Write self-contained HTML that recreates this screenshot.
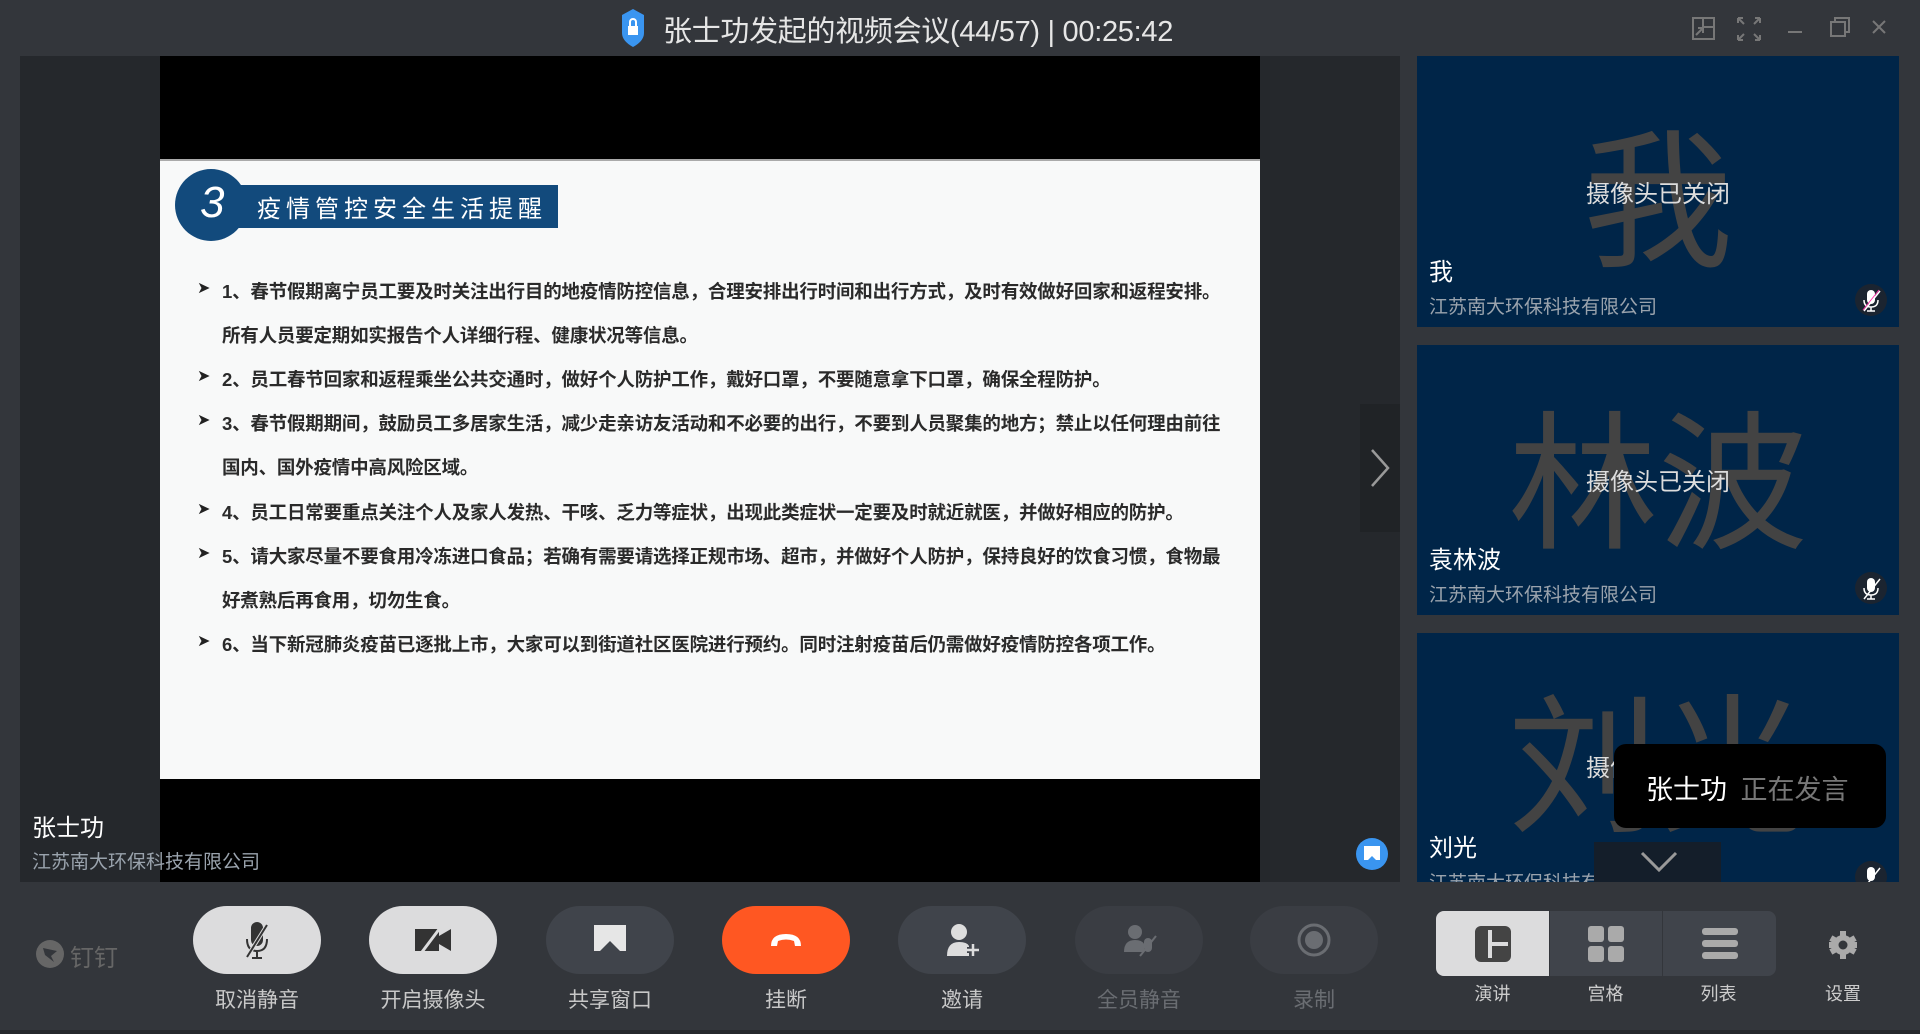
<!DOCTYPE html>
<html><head><meta charset="utf-8"><style>
*{margin:0;padding:0;box-sizing:border-box}
body{width:1920px;height:1034px;background:#33363b;font-family:"Liberation Sans","Noto Sans CJK SC",sans-serif;position:relative;overflow:hidden;color:#fff}
.a{position:absolute}
.title{left:663px;top:8px;font-size:29px;color:#e6e6e6;white-space:nowrap;letter-spacing:-0.3px}
.main{left:20px;top:56px;width:1380px;height:826px;background:#25282c}
.black{left:160px;top:56px;width:1100px;height:826px;background:#000}
.slide{left:160px;top:159px;width:1100px;height:620px;background:#f8f9f9;border-top:2px solid #aaa}
.ln{position:absolute;left:62px;font-size:18.5px;color:#2a2a2a;white-space:nowrap;font-weight:bold;letter-spacing:-0.2px}
.ar{position:absolute;left:37px;font-size:16px;color:#222}
.tile{left:1417px;width:482px;background:#002548;overflow:hidden}
.big{position:absolute;left:0;width:100%;text-align:center;color:#434343;font-size:150px;line-height:1}
.cam{position:absolute;width:100%;text-align:center;font-size:24px;color:#ddd}
.nm{position:absolute;left:12px;font-size:24px;color:#fff}
.co{position:absolute;left:12px;font-size:19px;color:#9aa3ad}
.mic{position:absolute;right:12px;width:32px;height:32px}
.btn{top:906px;width:128px;height:68px;border-radius:34px}
.lb{top:984px;font-size:21px;color:#c8c8c8;width:160px;text-align:center}
</style></head><body>
<svg class="a" style="left:622px;top:9px" width="22" height="38" viewBox="0 0 22 38"><path d="M11 0 L22 6 L22 24 Q22 32 11 38 Q0 32 0 24 L0 6Z" fill="#3a95f0"/><rect x="6" y="17" width="10" height="9" fill="#fff"/><path d="M8 17 V13 a3 3 0 0 1 6 0 V17" stroke="#fff" stroke-width="2" fill="none"/></svg>
<div class="a title">张士功发起的视频会议(44/57) | 00:25:42</div>
<svg class="a" style="left:1690px;top:15px" width="200" height="28" viewBox="0 0 200 28" stroke="#777" stroke-width="2" fill="none">
<rect x="3" y="3" width="21" height="21"/><rect x="13" y="3" width="11" height="9"/><path d="M6 20 L13 13 M8 13 H13 V18"/>
<path d="M48 3 L54 9 M48 3 V8 M48 3 H53 M70 3 L64 9 M70 3 H65 M70 3 V8 M48 25 L54 19 M48 25 V20 M48 25 H53 M70 25 L64 19 M70 25 H65 M70 25 V20"/>
<path d="M98 17 H112"/>
<rect x="141" y="7" width="14" height="14"/><path d="M145 7 V3 H159 V17 H155"/>
<path d="M183 6 L195 18 M195 6 L183 18"/></svg>
<div class="a main"></div>
<div class="a black"></div>
<div class="a slide">
<div style="position:absolute;left:15px;top:8px;width:72px;height:72px;border-radius:50%;background:#124a7c"></div>
<div style="position:absolute;left:78px;top:24px;width:320px;height:43px;background:#124a7c"></div>
<div style="position:absolute;left:40px;top:17px;font-size:44px;font-style:italic;color:#fff;font-family:'Liberation Sans'">3</div>
<div style="position:absolute;left:97px;top:28px;font-size:24px;color:#fff;letter-spacing:5px">疫情管控安全生活提醒</div>
<div class="ar" style="top:117px">➤</div><div class="ln" style="top:117px">1、春节假期离宁员工要及时关注出行目的地疫情防控信息，合理安排出行时间和出行方式，及时有效做好回家和返程安排。</div>
<div class="ln" style="top:161px">所有人员要定期如实报告个人详细行程、健康状况等信息。</div>
<div class="ar" style="top:205px">➤</div><div class="ln" style="top:205px">2、员工春节回家和返程乘坐公共交通时，做好个人防护工作，戴好口罩，不要随意拿下口罩，确保全程防护。</div>
<div class="ar" style="top:249px">➤</div><div class="ln" style="top:249px">3、春节假期期间，鼓励员工多居家生活，减少走亲访友活动和不必要的出行，不要到人员聚集的地方；禁止以任何理由前往</div>
<div class="ln" style="top:293px">国内、国外疫情中高风险区域。</div>
<div class="ar" style="top:338px">➤</div><div class="ln" style="top:338px">4、员工日常要重点关注个人及家人发热、干咳、乏力等症状，出现此类症状一定要及时就近就医，并做好相应的防护。</div>
<div class="ar" style="top:382px">➤</div><div class="ln" style="top:382px">5、请大家尽量不要食用冷冻进口食品；若确有需要请选择正规市场、超市，并做好个人防护，保持良好的饮食习惯，食物最</div>
<div class="ln" style="top:426px">好煮熟后再食用，切勿生食。</div>
<div class="ar" style="top:470px">➤</div><div class="ln" style="top:470px">6、当下新冠肺炎疫苗已逐批上市，大家可以到街道社区医院进行预约。同时注射疫苗后仍需做好疫情防控各项工作。</div>
</div>
<div class="a" style="left:32px;top:808px;font-size:24px">张士功</div>
<div class="a" style="left:32px;top:847px;font-size:19px;color:#9aa3ad">江苏南大环保科技有限公司</div>
<div class="a" style="left:1360px;top:404px;width:40px;height:128px;background:#202326"></div>
<svg class="a" style="left:1370px;top:448px" width="20" height="40"><path d="M2 2 L18 20 L2 38" stroke="#999" stroke-width="2.5" fill="none"/></svg>
<svg class="a" style="left:1356px;top:838px" width="32" height="32"><circle cx="16" cy="16" r="16" fill="#3a95f0"/><rect x="8" y="8" width="16" height="14" fill="#fff"/><path d="M10 24 L16 18 L22 24" fill="#3a95f0"/></svg>

<div class="a tile" style="top:56px;height:271px">
<div class="big" style="top:72px">我</div><div class="cam" style="top:118px">摄像头已关闭</div>
<div class="nm" style="top:196px">我</div><div class="co" style="top:236px">江苏南大环保科技有限公司</div>
<svg class="mic" style="top:228px" viewBox="0 0 32 32"><circle cx="16" cy="16" r="16" fill="#1b2430"/><rect x="12" y="6" width="8" height="14" rx="4" fill="#fff"/><path d="M9 16 Q9 23 16 23 Q23 23 23 16 M16 23 V27 M12 27 H20" stroke="#fff" stroke-width="1.5" fill="none"/><path d="M8 26 L24 6" stroke="#f3a" stroke-width="1"/><path d="M9 27 L25 7" stroke="#fff" stroke-width="1.5"/></svg></div>
<div class="a tile" style="top:345px;height:270px">
<div class="big" style="top:65px">林波</div><div class="cam" style="top:117px">摄像头已关闭</div>
<div class="nm" style="top:195px">袁林波</div><div class="co" style="top:235px">江苏南大环保科技有限公司</div>
<svg class="mic" style="top:227px" viewBox="0 0 32 32"><circle cx="16" cy="16" r="16" fill="#1b2430"/><rect x="12" y="6" width="8" height="14" rx="4" fill="#fff"/><path d="M9 16 Q9 23 16 23 Q23 23 23 16 M16 23 V27 M12 27 H20" stroke="#fff" stroke-width="1.5" fill="none"/><path d="M9 27 L25 7" stroke="#fff" stroke-width="1.5"/></svg></div>
<div class="a tile" style="top:633px;height:249px">
<div class="big" style="top:60px">刘光</div><div class="cam" style="top:115px">摄像头已关闭</div>
<div class="nm" style="top:195px">刘光</div><div class="co" style="top:235px">江苏南大环保科技有限公司</div>
<svg class="mic" style="top:228px" viewBox="0 0 32 32"><circle cx="16" cy="16" r="16" fill="#1b2430"/><rect x="12" y="6" width="8" height="14" rx="4" fill="#fff"/><path d="M9 27 L25 7" stroke="#fff" stroke-width="1.5"/></svg>
<div style="position:absolute;left:177px;top:209px;width:127px;height:45px;background:#141e2a"></div>
<svg style="position:absolute;left:223px;top:218px" width="38" height="22"><path d="M2 2 L19 19 L36 2" stroke="#999" stroke-width="3" fill="none"/></svg></div>
<div class="a" style="left:1614px;top:744px;width:272px;height:84px;background:#000;border-radius:12px;font-size:27px;padding:24px 0 0 32px;white-space:nowrap">张士功 <span style="color:#777;margin-left:6px">正在发言</span></div>

<div class="a" style="left:0;top:1030px;width:1920px;height:4px;background:#25282c"></div>
<svg class="a" style="left:36px;top:940px" width="28" height="28"><circle cx="14" cy="14" r="14" fill="#666"/><path d="M7 8 L21 11 L15 16 L18 22 L9 15Z" fill="#33363b"/></svg>
<div class="a" style="left:70px;top:938px;font-size:24px;color:#666">钉钉</div>

<div class="a btn" style="left:193px;background:#dcdcdd"></div>
<svg class="a" style="left:243px;top:921px" width="28" height="40" stroke="#333" stroke-width="2" fill="none"><rect x="9" y="2" width="10" height="22" rx="5" fill="#333"/><path d="M4 18 Q4 30 14 30 Q24 30 24 18 M14 30 V37 M9 37 H19"/><path d="M4 36 L24 4" stroke="#dcdcdd" stroke-width="4"/><path d="M4 36 L24 4"/></svg>
<div class="a lb" style="left:177px">取消静音</div>
<div class="a btn" style="left:369px;background:#dcdcdd"></div>
<svg class="a" style="left:413px;top:923px" width="40" height="34"><rect x="2" y="6" width="24" height="22" fill="#333"/><path d="M26 13 L38 6 V28 L26 21Z" fill="#333"/><path d="M6 33 L30 1" stroke="#dcdcdd" stroke-width="3"/></svg>
<div class="a lb" style="left:353px">开启摄像头</div>
<div class="a btn" style="left:546px;background:#40444b"></div>
<svg class="a" style="left:593px;top:924px" width="34" height="30"><rect x="1" y="1" width="32" height="26" fill="#e6e6e6"/><path d="M7 27 L17 17 L27 27Z" fill="#40444b"/></svg>
<div class="a lb" style="left:530px">共享窗口</div>
<div class="a btn" style="left:722px;background:#ff5722"></div>
<svg class="a" style="left:768px;top:930px" width="36" height="20"><path d="M3 16 Q3 4 18 4 Q33 4 33 16 L27 16 L26 11 Q18 8 10 11 L9 16Z" fill="#fff"/></svg>
<div class="a lb" style="left:706px">挂断</div>
<div class="a btn" style="left:898px;background:#40444b"></div>
<svg class="a" style="left:945px;top:922px" width="36" height="36"><circle cx="14" cy="10" r="8" fill="#ddd"/><path d="M2 34 Q2 20 14 20 Q22 20 24 24 V34Z" fill="#ddd"/><path d="M28 22 V34 M22 28 H34" stroke="#40444b" stroke-width="6"/><path d="M28 22 V34 M22 28 H34" stroke="#ddd" stroke-width="2.5"/></svg>
<div class="a lb" style="left:882px">邀请</div>
<div class="a btn" style="left:1075px;background:#3a3d43"></div>
<svg class="a" style="left:1122px;top:922px" width="36" height="36" fill="#6a6d72"><circle cx="13" cy="10" r="7"/><path d="M2 30 Q2 18 13 18 Q20 18 22 22 V30Z"/><rect x="22" y="16" width="8" height="14" rx="4"/><path d="M18 34 L34 14" stroke="#6a6d72" stroke-width="2"/></svg>
<div class="a lb" style="left:1059px;color:#6a6d72">全员静音</div>
<div class="a btn" style="left:1250px;background:#3a3d43"></div>
<svg class="a" style="left:1296px;top:922px" width="36" height="36"><circle cx="18" cy="18" r="15" stroke="#6a6d72" stroke-width="3" fill="none"/><circle cx="18" cy="18" r="9" fill="#6a6d72"/></svg>
<div class="a lb" style="left:1234px;color:#6a6d72">录制</div>

<div class="a" style="left:1436px;top:911px;width:340px;height:65px;border-radius:8px;overflow:hidden;background:#40444b">
<div style="position:absolute;left:0;top:0;width:113px;height:65px;background:#dcdcdd"></div>
<div style="position:absolute;left:113px;top:0;width:1px;height:65px;background:#33363b"></div>
<div style="position:absolute;left:226px;top:0;width:1px;height:65px;background:#33363b"></div>
<svg style="position:absolute;left:38px;top:14px" width="38" height="38"><rect x="1" y="1" width="36" height="36" rx="6" fill="#444"/><rect x="14" y="5" width="4" height="28" fill="#dcdcdd"/><rect x="18" y="17" width="16" height="4" fill="#dcdcdd"/></svg>
<svg style="position:absolute;left:151px;top:14px" width="38" height="38" fill="#aaa"><rect x="1" y="1" width="16" height="16" rx="3"/><rect x="21" y="1" width="16" height="16" rx="3"/><rect x="1" y="21" width="16" height="16" rx="3"/><rect x="21" y="21" width="16" height="16" rx="3"/></svg>
<svg style="position:absolute;left:265px;top:16px" width="38" height="34" fill="#aaa"><rect x="1" y="1" width="36" height="7" rx="3"/><rect x="1" y="13" width="36" height="7" rx="3"/><rect x="1" y="25" width="36" height="7" rx="3"/></svg>
</div>
<div class="a" style="left:1436px;top:980px;width:113px;text-align:center;font-size:18px;color:#ccc">演讲</div>
<div class="a" style="left:1549px;top:980px;width:113px;text-align:center;font-size:18px;color:#ccc">宫格</div>
<div class="a" style="left:1662px;top:980px;width:113px;text-align:center;font-size:18px;color:#ccc">列表</div>
<svg class="a" style="left:1828px;top:930px" width="30" height="30" viewBox="0 0 30 30"><g fill="#aaa"><circle cx="15" cy="15" r="10"/><rect x="12" y="1" width="6" height="28"/><rect x="1" y="12" width="28" height="6"/><rect x="12" y="1" width="6" height="28" transform="rotate(60 15 15)"/><rect x="12" y="1" width="6" height="28" transform="rotate(-60 15 15)"/></g><circle cx="15" cy="15" r="4.5" fill="#33363b"/></svg>
<div class="a" style="left:1808px;top:980px;width:70px;text-align:center;font-size:18px;color:#ccc">设置</div>
</body></html>
